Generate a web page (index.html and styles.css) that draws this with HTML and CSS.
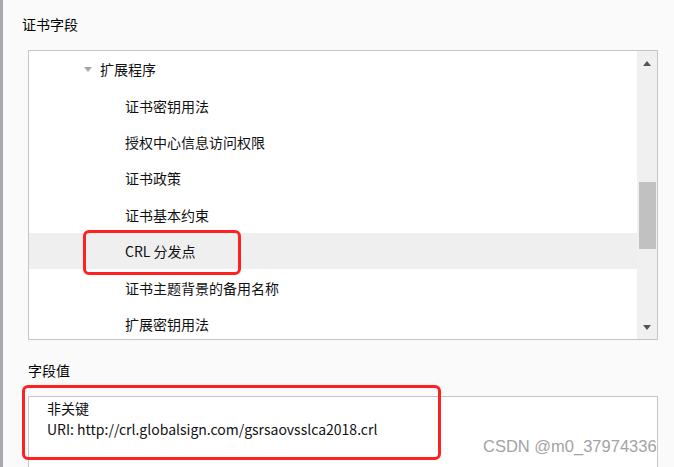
FILE: index.html
```html
<!DOCTYPE html>
<html lang="zh-CN">
<head>
    <meta charset="UTF-8">
    <title>证书字段</title>
    <link rel="stylesheet" href="styles.css">
</head>
<body>
    <div class="window">
        <div class="panel">
            <h3 class="caption caption-top">证书字段</h3>

            <!-- 证书字段树 -->
            <div class="tree-box">
                <ul class="tree">
                    <li class="row parent"><span class="twisty"></span>扩展程序</li>
                    <li class="row child">证书密钥用法</li>
                    <li class="row child">授权中心信息访问权限</li>
                    <li class="row child">证书政策</li>
                    <li class="row child">证书基本约束</li>
                    <li class="row child selected">CRL 分发点</li>
                    <li class="row child">证书主题背景的备用名称</li>
                    <li class="row child">扩展密钥用法</li>
                </ul>
                <div class="scrollbar">
                    <span class="arrow arrow-up"></span>
                    <div class="track">
                        <div class="thumb"></div>
                    </div>
                    <span class="arrow arrow-down"></span>
                </div>
            </div>

            <h3 class="caption caption-value">字段值</h3>

            <!-- 字段值 -->
            <div class="value-box">
                <p>非关键</p>
                <p>URI: http://crl.globalsign.com/gsrsaovsslca2018.crl</p>
            </div>
        </div>

        <div class="mark mark-crl"></div>
        <div class="mark mark-value"></div>
        <div class="watermark">CSDN @m0_37974336</div>
    </div>
</body>
</html>
```

FILE: styles.css
```css
* {
    box-sizing: border-box;
    margin: 0;
    padding: 0;
}

body {
    background-color: #fafafa;
    font-family: "Noto Sans CJK SC", "Noto Sans", sans-serif;
    font-size: 14px;
    color: #111;
    overflow: hidden;
}

.window {
    position: relative;
    height: 467px;
    overflow: hidden;
    border-left: 3px solid #a8aab0;
}

.panel {
    padding: 0 16px 0 25px;
}

.caption {
    font-weight: normal;
    font-size: 14px;
    line-height: 20px;
    color: #000;
}

.caption-top {
    margin-left: -6px;
    padding-top: 14px;
    height: 50px;
}

.caption-value {
    margin-top: 19px;
    height: 37px;
    padding-top: 1px;
}

.tree-box {
    display: flex;
    width: 630px;
    height: 290px;
    background-color: #fff;
    border: 1px solid #c6c6c6;
    overflow: hidden;
}

.tree {
    flex: 1;
    list-style: none;
    overflow: hidden;
}

.row {
    display: flex;
    align-items: center;
    height: 36.4px;
    white-space: nowrap;
}

.parent {
    padding-left: 55px;
}

.child {
    padding-left: 96px;
}

.selected {
    background-color: #efefef;
}

.twisty {
    width: 0;
    height: 0;
    margin-right: 8px;
    border-left: 4.5px solid transparent;
    border-right: 4.5px solid transparent;
    border-top: 5px solid #a6a6a6;
}

.scrollbar {
    display: flex;
    flex-direction: column;
    align-items: center;
    width: 20px;
    background-color: #f0f0f0;
}

.arrow {
    width: 0;
    height: 0;
    border-left: 4.5px solid transparent;
    border-right: 4.5px solid transparent;
}

.arrow-up {
    margin-top: 10px;
    border-bottom: 5px solid #555;
}

.arrow-down {
    margin-bottom: 9px;
    border-top: 5px solid #555;
}

.track {
    flex: 1;
    width: 100%;
    padding: 0 1px 0 2px;
}

.thumb {
    margin-top: 116px;
    height: 67px;
    background-color: #c1c1c1;
}

.value-box {
    width: 630px;
    height: 100px;
    padding: 1px 0 0 18px;
    background-color: #fff;
    border: 1px solid #c6c6c6;
    line-height: 21px;
}

.mark {
    position: absolute;
    border: 3px solid #ff2121;
    border-radius: 6px;
}

.mark-crl {
    left: 80px;
    top: 230px;
    width: 158px;
    height: 45px;
}

.mark-value {
    left: 19px;
    top: 385px;
    width: 419px;
    height: 75px;
}

.watermark {
    position: absolute;
    left: 480px;
    top: 437px;
    font-family: "Liberation Sans", Arial, sans-serif;
    font-size: 16.5px;
    color: #a3a3a3;
    white-space: nowrap;
}
```
